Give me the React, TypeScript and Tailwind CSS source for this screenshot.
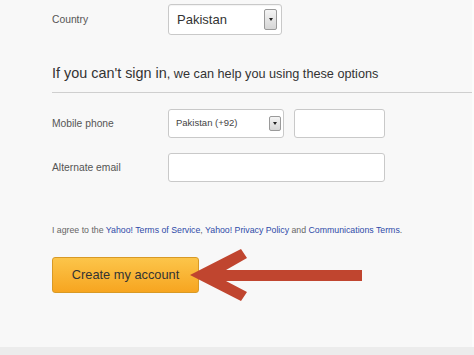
import React from "react";

function SelectArrow({ className }: { className: string }) {
  return (
    <span
      className={`flex items-center justify-center rounded-[2px] border border-[#9a9a9a] bg-[linear-gradient(#f4f4f4,#d6d6d6)] ${className}`}
      aria-hidden="true"
    >
      <span className="h-0 w-0 border-x-[2.5px] border-t-[3px] border-x-transparent border-t-[#222]" />
    </span>
  );
}

function Row({ label, children, className = "" }: { label: string; children: React.ReactNode; className?: string }) {
  return (
    <div className={`flex items-center ${className}`}>
      <span className="w-[116px] text-[10.3px] text-[#555]">{label}</span>
      {children}
    </div>
  );
}

export default function App() {
  return (
    <div className="relative h-[355px] w-[474px] overflow-hidden bg-[#f8f8f8] font-['Liberation_Sans',Arial,sans-serif]">
      <div className="flex h-[347px] flex-col border-r-2 border-r-[#fcfcfc] pl-[52px] pt-[4px]">
        <Row label="Country">
          <div className="flex h-[31px] w-[114px] items-center justify-between rounded-[3px] border border-[#c9c9c9] bg-white pl-[8px] pr-[4px] shadow-[inset_0_1px_1px_rgba(0,0,0,0.05)]">
            <span className="text-[13px] text-[#333]">Pakistan</span>
            <SelectArrow className="h-[21px] w-[13px]" />
          </div>
        </Row>

        <h2 className="mt-[28px] h-[20px] leading-[20px] text-[#333]">
          <span className="text-[14.4px]">If you can't sign in</span>
          <span className="text-[12.7px]">, we can help you using these options</span>
        </h2>

        <div className="mt-[9px] border-t border-t-[#cfcfcf]" />

        <Row label="Mobile phone" className="mt-[16px]">
          <div className="flex h-[29px] w-[116px] items-center justify-between rounded-[3px] border border-[#c9c9c9] bg-white pl-[7px] pr-[2px]">
            <span className="text-[9.5px] text-[#444]">Pakistan (+92)</span>
            <SelectArrow className="h-[15px] w-[12px]" />
          </div>
          <div className="ml-[10px] h-[29px] w-[91px] rounded-[3px] border border-[#c9c9c9] bg-white" />
        </Row>

        <Row label="Alternate email" className="mt-[15px]">
          <div className="h-[29px] w-[217px] rounded-[3px] border border-[#c9c9c9] bg-white" />
        </Row>

        <p className="mt-[42px] h-[12px] text-[8.75px] leading-[12px] text-[#666]">
          I agree to the <a href="#" className="text-[#2f4ba8]">Yahoo! Terms of Service</a>,{" "}
          <a href="#" className="text-[#2f4ba8]">Yahoo! Privacy Policy</a> and{" "}
          <a href="#" className="text-[#2f4ba8]">Communications Terms</a>.
        </p>

        <button
          type="button"
          className="mt-[21px] h-[36px] w-[147px] rounded-[3px] border border-[#d89a26] bg-[linear-gradient(#fcc54a,#f7a520)] text-[12.8px] text-[#333]"
        >
          Create my account
        </button>
      </div>
      <div className="h-[8px] bg-[#ececec]" />

      <svg className="absolute left-0 top-0" width="474" height="355" viewBox="0 0 474 355" aria-hidden="true">
        <polygon
          points="190,275 241,249 247,258 226,270 362,270 362,281 226,281 247,292 241,301"
          fill="#c0452f"
        />
      </svg>
    </div>
  );
}
